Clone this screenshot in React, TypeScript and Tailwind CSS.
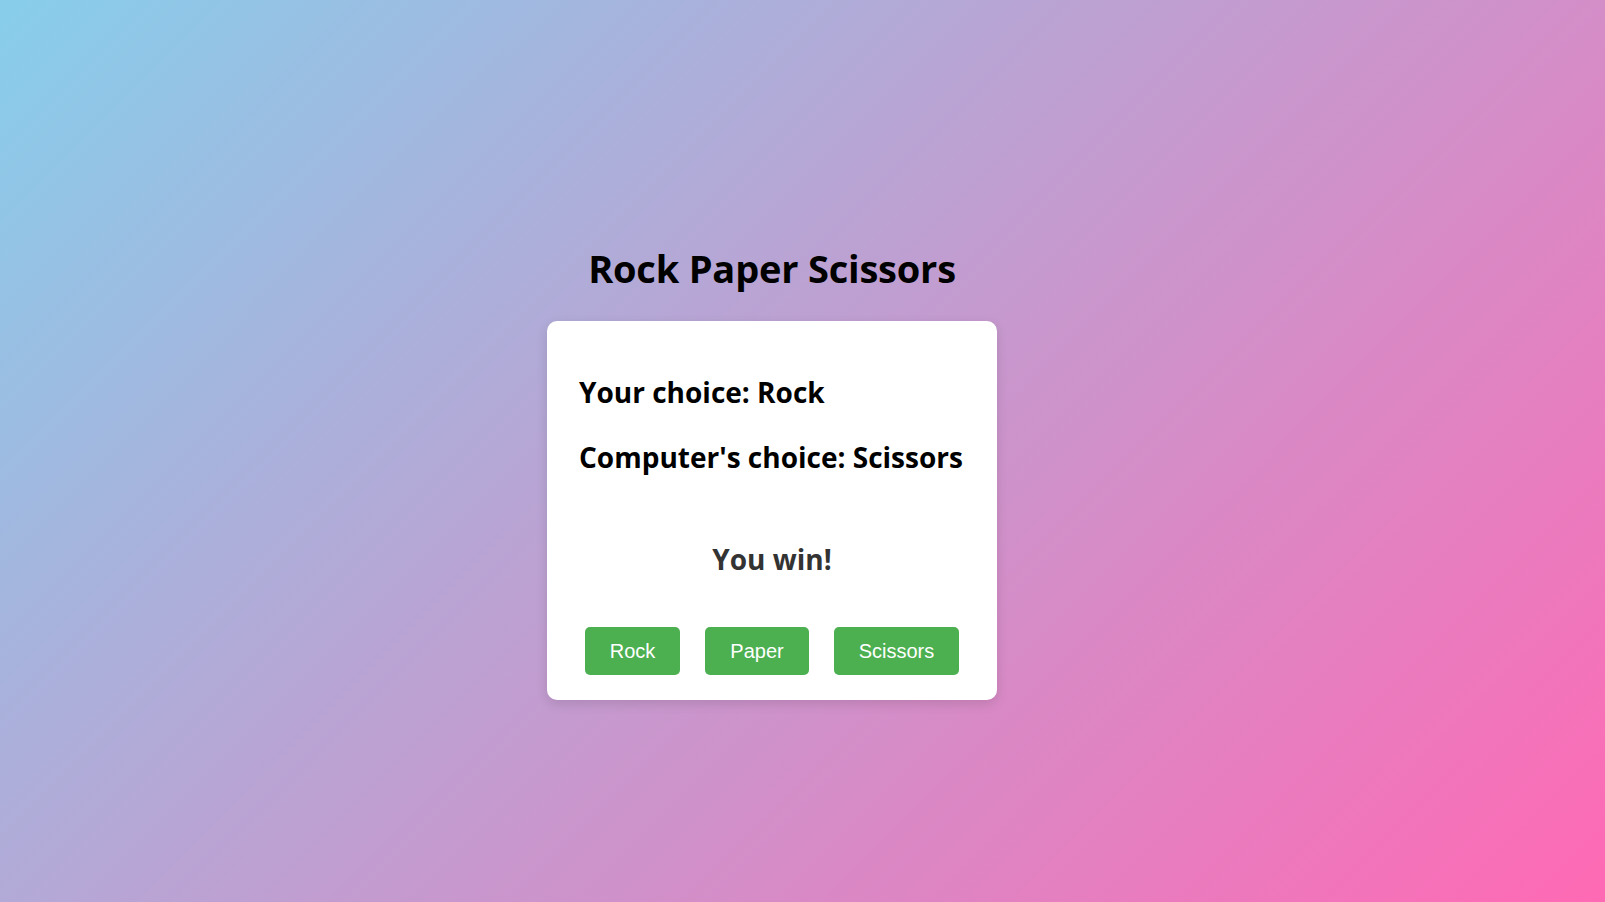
import React from "react";

export default function App() {
  return (
    <div
      className="w-full h-[902px] overflow-hidden flex flex-col items-center pr-[61px] bg-[linear-gradient(135deg,#87ceeb,#ff69b4)]"
      style={{ fontFamily: '"Open Sans", sans-serif' }}
    >
      <h1 className="mt-[242px] text-[38px] leading-[52px] font-bold text-black tracking-[-0.2px]">
        Rock Paper Scissors
      </h1>
      <div className="mt-[27px] w-[450px] h-[379px] bg-white rounded-[10px] shadow-[0_4px_12px_rgba(0,0,0,0.12)] px-[32px] pt-[51px] flex flex-col">
        <div className="text-[28px] leading-[40px] font-bold text-black">Your choice: Rock</div>
        <div className="mt-[25px] text-[28px] leading-[40px] font-bold text-black">Computer's choice: Scissors</div>
        <div className="mt-[62px] text-center text-[28px] leading-[40px] font-bold text-[#333]">You win!</div>
        <div className="mt-[48px] flex justify-center gap-[25px]" style={{ fontFamily: '"Liberation Sans", Arial, sans-serif' }}>
          <button className="h-[48px] w-[95px] bg-[#4caf50] text-white text-[20px] rounded-[5px]">Rock</button>
          <button className="h-[48px] w-[104px] bg-[#4caf50] text-white text-[20px] rounded-[5px]">Paper</button>
          <button className="h-[48px] w-[125px] bg-[#4caf50] text-white text-[20px] rounded-[5px]">Scissors</button>
        </div>
      </div>
    </div>
  );
}
